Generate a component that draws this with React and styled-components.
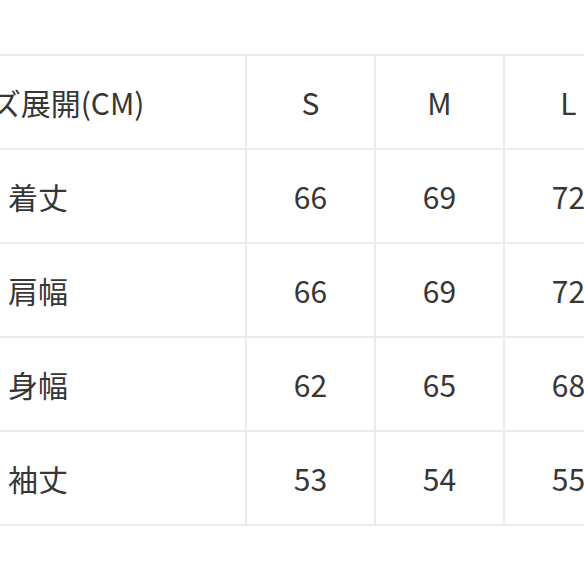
import React from "react";
import styled, { createGlobalStyle } from "styled-components";

const Global = createGlobalStyle`
  html, body {
    margin: 0;
    padding: 0;
    background: #ffffff;
    overflow: hidden;
  }
  body {
    width: 584px;
    height: 584px;
  }
`;

const Page = styled.div`
  width: 584px;
  height: 584px;
  overflow: hidden;
  padding-top: 54px;
  box-sizing: border-box;
`;

const Table = styled.table`
  border-collapse: collapse;
  table-layout: fixed;
  width: 805px;
  min-width: 805px;
  margin-left: -171px;
  font-family: "Noto Sans CJK JP", "Noto Sans", sans-serif;
  font-size: 30px;
  color: #363636;
`;

const Col = styled.col`
  width: ${(p) => (p.$label ? "416px" : "129px")};
`;

const Cell = styled.td`
  height: 92px;
  padding: 0;
  border: 2px solid #ebebeb;
  text-align: center;
  vertical-align: middle;
  font-weight: 400;
  line-height: 1;
  white-space: nowrap;
`;

const sizes = ["S", "M", "L"];
const rows = [
  { label: "着丈", values: [66, 69, 72] },
  { label: "肩幅", values: [66, 69, 72] },
  { label: "身幅", values: [62, 65, 68] },
  { label: "袖丈", values: [53, 54, 55] },
];

export default function App() {
  return (
    <Page>
      <Global />
      <Table>
        <colgroup>
          <Col $label />
          <Col />
          <Col />
          <Col />
        </colgroup>
        <tbody>
          <tr>
            <Cell>サイズ展開(CM)</Cell>
            {sizes.map((s) => (
              <Cell key={s}>{s}</Cell>
            ))}
          </tr>
          {rows.map((r) => (
            <tr key={r.label}>
              <Cell>{r.label}</Cell>
              {r.values.map((v, i) => (
                <Cell key={i}>{v}</Cell>
              ))}
            </tr>
          ))}
        </tbody>
      </Table>
    </Page>
  );
}
